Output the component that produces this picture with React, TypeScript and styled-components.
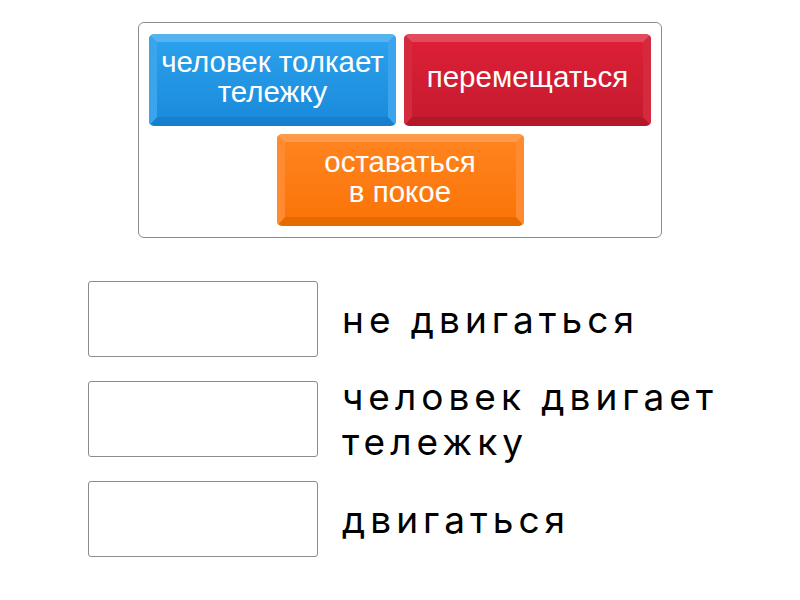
import React from "react";
import styled, { createGlobalStyle } from "styled-components";

const Global = createGlobalStyle`
  html, body { margin: 0; padding: 0; background: #fff; }
  body { font-family: Inter, "Noto Sans", sans-serif; }
`;

const Page = styled.div`
  width: 800px;
  height: 600px;
  display: flex;
  flex-direction: column;
  align-items: center;
  padding-top: 22px;
  box-sizing: border-box;
`;

const Bank = styled.div`
  width: 524px;
  box-sizing: border-box;
  border: 1px solid #8c8c8c;
  border-radius: 6px;
  padding: 11px 10px 11px 10px;
  display: flex;
  flex-wrap: wrap;
  justify-content: center;
  gap: 8px;
`;

type Palette = { top: string; side: string; bottom: string; a: string; b: string };

const palettes: Record<string, Palette> = {
  blue: { top: "#55b3f0", side: "#3aa5ec", bottom: "#1680cc", a: "#2ba0ec", b: "#1b8cdb" },
  red: { top: "#e24b5c", side: "#d42a3e", bottom: "#b3172a", a: "#dc1f36", b: "#c61b2f" },
  orange: { top: "#ff9a4a", side: "#ff8a30", bottom: "#e56a00", a: "#ff831f", b: "#fb7508" },
};

const Tile = styled.div<{ $c: Palette }>`
  width: 247px;
  height: 92px;
  box-sizing: border-box;
  border-radius: 5px;
  border-style: solid;
  border-width: 8px 8px 9px 8px;
  border-top-color: ${(p) => p.$c.top};
  border-left-color: ${(p) => p.$c.side};
  border-right-color: ${(p) => p.$c.side};
  border-bottom-color: ${(p) => p.$c.bottom};
  background: linear-gradient(${(p) => p.$c.a}, ${(p) => p.$c.b});
  background-clip: padding-box;
  display: flex;
  align-items: center;
  justify-content: center;
  text-align: center;
  color: #fff;
  font-family: "Liberation Sans", Arial, sans-serif;
  font-size: 29.5px;
  line-height: 30px;
  padding: 0 0 5px 0;
  white-space: nowrap;
`;

const Slots = styled.div`
  align-self: stretch;
  margin-top: 43px;
  padding-left: 88px;
  display: flex;
  flex-direction: column;
  gap: 24px;
`;

const Row = styled.div`
  height: 76px;
  display: flex;
  align-items: center;
  gap: 24px;
`;

const Box = styled.div`
  width: 230px;
  height: 76px;
  box-sizing: border-box;
  border: 1px solid #8c8c8c;
  border-radius: 3px;
  flex: none;
`;

const Label = styled.div`
  font-family: Inter, "Noto Sans", sans-serif;
  font-size: 37px;
  letter-spacing: 5px;
  line-height: 45px;
  color: #000;
  white-space: nowrap;
`;

export default function App() {
  return (
    <>
      <Global />
      <Page>
        <Bank>
          <Tile $c={palettes.blue}>
            человек толкает
            <br />
            тележку
          </Tile>
          <Tile $c={palettes.red}>перемещаться</Tile>
          <Tile $c={palettes.orange}>
            оставаться
            <br />в покое
          </Tile>
        </Bank>
        <Slots>
          <Row>
            <Box />
            <Label>не двигаться</Label>
          </Row>
          <Row>
            <Box />
            <Label>
              человек двигает
              <br />
              тележку
            </Label>
          </Row>
          <Row>
            <Box />
            <Label>двигаться</Label>
          </Row>
        </Slots>
      </Page>
    </>
  );
}
